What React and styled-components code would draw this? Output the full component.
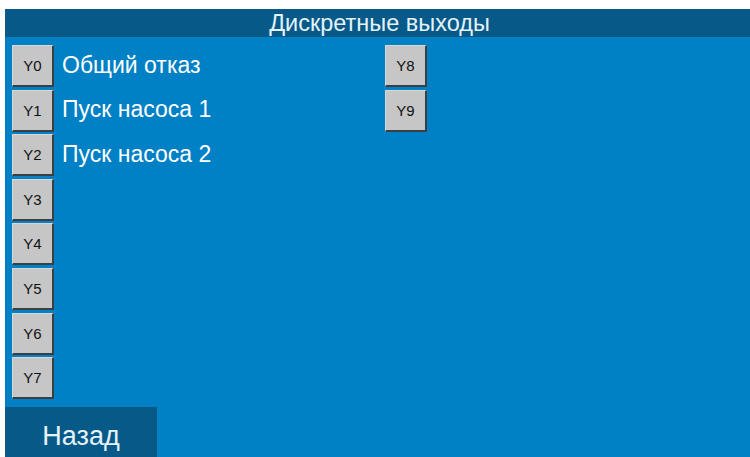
import React from "react";
import styled, { createGlobalStyle } from "styled-components";

const GlobalStyle = createGlobalStyle`
  html, body {
    margin: 0;
    padding: 0;
    background: #ffffff;
  }
  body {
    font-family: "Liberation Sans", Arial, sans-serif;
  }
`;

const outputs = [
  [
    { id: "Y0", label: "Общий отказ" },
    { id: "Y1", label: "Пуск насоса 1" },
    { id: "Y2", label: "Пуск насоса 2" },
    { id: "Y3", label: "" },
    { id: "Y4", label: "" },
    { id: "Y5", label: "" },
    { id: "Y6", label: "" },
    { id: "Y7", label: "" },
  ],
  [
    { id: "Y8", label: "" },
    { id: "Y9", label: "" },
  ],
];

const Screen = () => {
  return (
    <>
      <GlobalStyle />
      <Panel>
        <Header>Дискретные выходы</Header>
        <Body>
          <Columns>
            {outputs.map((col, i) => (
              <Column key={i}>
                {col.map((o) => (
                  <Row key={o.id}>
                    <OutButton>{o.id}</OutButton>
                    {o.label && <Label>{o.label}</Label>}
                  </Row>
                ))}
              </Column>
            ))}
          </Columns>
          <BackButton>Назад</BackButton>
        </Body>
      </Panel>
    </>
  );
};

export default Screen;

const Panel = styled.div`
  width: 745px;
  height: 448px;
  margin: 9px 0 0 5px;
  display: flex;
  flex-direction: column;
  background: #0080c5;
`;

const Header = styled.div`
  height: 28px;
  flex-shrink: 0;
  background: #075a88;
  color: #e4f2fb;
  font-size: 23.5px;
  line-height: 28px;
  text-align: center;
  padding-left: 4px;
`;

const Body = styled.div`
  flex: 1;
  display: flex;
  flex-direction: column;
  justify-content: space-between;
`;

const Columns = styled.div`
  display: flex;
  padding: 8px 0 0 7px;
`;

const Column = styled.div`
  width: 373px;
  flex-shrink: 0;
  display: flex;
  flex-direction: column;
  gap: 2.6px;
`;

const Row = styled.div`
  display: flex;
  align-items: center;
  height: 42px;
`;

const OutButton = styled.div`
  box-sizing: border-box;
  width: 42px;
  height: 42px;
  flex-shrink: 0;
  display: flex;
  align-items: center;
  justify-content: center;
  background: #c6c6c6;
  border-top: 1px solid #d8d8d8;
  border-left: 1px solid #d8d8d8;
  border-right: 2px solid #3a3f44;
  border-bottom: 2px solid #3a3f44;
  color: #111;
  font-size: 15px;
`;

const Label = styled.div`
  margin-left: 8px;
  margin-top: -2px;
  color: #ffffff;
  font-size: 23px;
`;

const BackButton = styled.div`
  width: 152px;
  height: 50px;
  background: #075a88;
  color: #e4f2fb;
  font-size: 27px;
  line-height: 58px;
  text-align: center;
`;
